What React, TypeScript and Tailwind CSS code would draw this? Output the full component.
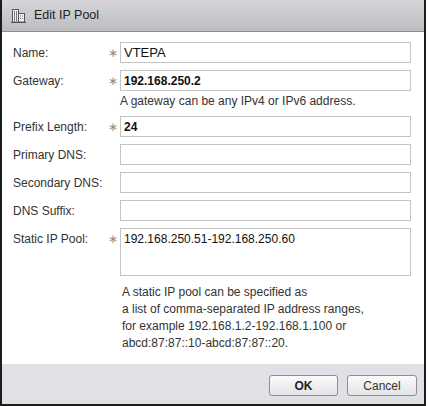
import React from "react";

const font = { fontFamily: '"Liberation Sans", Arial, sans-serif' };

function BuildingIcon() {
  return (
    <svg width="15" height="15" viewBox="0 0 15 15" className="shrink-0">
      <rect x="1.5" y="1.5" width="6" height="12.5" fill="#f4f4f4" stroke="#555" strokeWidth="1" />
      <rect x="7.5" y="5.5" width="6" height="8.5" fill="#f4f4f4" stroke="#555" strokeWidth="1" />
      <line x1="3.5" y1="3" x2="3.5" y2="13" stroke="#777" strokeWidth="1" />
      <line x1="5.5" y1="3" x2="5.5" y2="13" stroke="#777" strokeWidth="1" />
      <rect x="9" y="7.5" width="1" height="1" fill="#666" />
      <rect x="11" y="7.5" width="1" height="1" fill="#666" />
      <rect x="9" y="10" width="1" height="1" fill="#666" />
      <rect x="11" y="10" width="1" height="1" fill="#666" />
      <line x1="0" y1="14.5" x2="15" y2="14.5" stroke="#555" strokeWidth="1" />
    </svg>
  );
}

function Row({
  label,
  required,
  children,
}: {
  label: string;
  required?: boolean;
  children: React.ReactNode;
}) {
  return (
    <div className="flex items-start">
      <div className="w-[92px] shrink-0 pt-[4px] text-[12px] leading-[15px] text-[#333]">{label}</div>
      <div className="w-[15px] shrink-0 pt-[4px] text-center text-[12px] leading-[15px] text-[#8a8a8a]">
        {required ? "∗" : ""}
      </div>
      <div className="flex-1 min-w-0">{children}</div>
    </div>
  );
}

function Field({ value, bold, big }: { value?: string; bold?: boolean; big?: boolean }) {
  return (
    <div
      className={`h-[21px] border border-[#c4c4c4] bg-white pl-[3px] flex items-center text-[#111] ${
        bold ? "font-bold text-[12px]" : big ? "text-[13px]" : "text-[12px]"
      }`}
    >
      {value}
    </div>
  );
}

export default function App() {
  return (
    <div className="w-[428px] h-[406px] bg-white" style={font}>
      <div className="w-[426px] h-[406px] flex flex-col border-x-2 border-b-2 border-[#1c1c1c] bg-white">
        <div className="h-[32px] shrink-0 flex items-center gap-[8px] pl-[9px] bg-gradient-to-b from-[#d6d6da] to-[#bcbcc1] border-b border-[#8e8e92]">
          <BuildingIcon />
          <span className="text-[12.5px] text-[#222]">Edit IP Pool</span>
        </div>

        <div className="flex-1 flex flex-col gap-[7px] pt-[10px] pl-[11px] pr-[13px]">
          <Row label="Name:" required>
            <Field value="VTEPA" big />
          </Row>
          <Row label="Gateway:" required>
            <Field value="192.168.250.2" bold />
            <div className="mt-[3px] text-[12px] leading-[15px] text-[#333]">
              A gateway can be any IPv4 or IPv6 address.
            </div>
          </Row>
          <Row label="Prefix Length:" required>
            <Field value="24" bold />
          </Row>
          <Row label="Primary DNS:">
            <Field />
          </Row>
          <Row label="Secondary DNS:">
            <Field />
          </Row>
          <Row label="DNS Suffix:">
            <Field />
          </Row>
          <Row label="Static IP Pool:" required>
            <div className="h-[48px] border border-[#c4c4c4] bg-white pl-[3px] pt-[3px] text-[12px] leading-[15px] text-[#111]">
              192.168.250.51-192.168.250.60
            </div>
            <div className="mt-[8px] pl-[2px] text-[12px] leading-[17px] text-[#333]">
              <div>A static IP pool can be specified as</div>
              <div>a list of comma-separated IP address ranges,</div>
              <div>for example 192.168.1.2-192.168.1.100 or</div>
              <div>abcd:87:87::10-abcd:87:87::20.</div>
            </div>
          </Row>
        </div>

        <div className="h-[40px] shrink-0 flex items-start justify-end gap-[9px] pt-[11px] pr-[7px] bg-[#e0e1e6]">
          <button className="w-[69px] h-[21px] rounded-[3px] border border-[#8f8f8f] bg-gradient-to-b from-[#fbfbfb] to-[#e4e4e6] text-[12px] font-bold text-[#222] leading-none">
            OK
          </button>
          <button className="w-[70px] h-[21px] rounded-[3px] border border-[#8f8f8f] bg-gradient-to-b from-[#fbfbfb] to-[#e4e4e6] text-[12px] text-[#333] leading-none">
            Cancel
          </button>
        </div>
      </div>
    </div>
  );
}
